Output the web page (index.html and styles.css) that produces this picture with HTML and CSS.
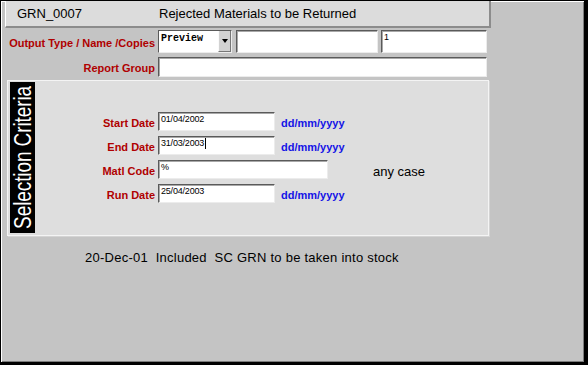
FILE: index.html
```html
<!DOCTYPE html>
<html lang="en">
<head>
    <meta charset="UTF-8">
    <title>GRN_0007 - Rejected Materials to be Returned</title>
    <link rel="stylesheet" href="styles.css">
</head>
<body>

    <div class="window">
        <div class="titlebar">
            <span class="report-code">GRN_0007</span>
            <span class="report-title">Rejected Materials to be Returned</span>
        </div>

        <div class="form-row row-output">
            <span class="label">Output Type / Name /Copies</span>
            <div class="combo">
                <span class="combo-value">Preview</span>
                <span class="combo-btn">
                    <svg width="6" height="4" viewBox="0 0 6 4"><path d="M0 0H6L3 4Z" fill="#000"/></svg>
                </span>
            </div>
            <div class="field field-name"></div>
            <div class="field field-copies">1</div>
        </div>

        <div class="form-row row-group">
            <span class="label">Report Group</span>
            <div class="field field-group"></div>
        </div>

        <div class="criteria">
            <div class="criteria-tab"><span>Selection Criteria</span></div>
            <div class="criteria-fields">
                <div class="crit-row">
                    <span class="label">Start Date</span>
                    <div class="field field-date">01/04/2002</div>
                    <span class="hint">dd/mm/yyyy</span>
                </div>
                <div class="crit-row">
                    <span class="label">End Date</span>
                    <div class="field field-date">31/03/2003<span class="caret"></span></div>
                    <span class="hint">dd/mm/yyyy</span>
                </div>
                <div class="crit-row">
                    <span class="label">Matl Code</span>
                    <div class="field field-code">%</div>
                    <span class="note-inline">any case</span>
                </div>
                <div class="crit-row">
                    <span class="label">Run Date</span>
                    <div class="field field-date">25/04/2003</div>
                    <span class="hint">dd/mm/yyyy</span>
                </div>
            </div>
        </div>

        <p class="footnote">20-Dec-01  Included  SC GRN to be taken into stock</p>
    </div>

</body>
</html>
```

FILE: styles.css
```css
body {
    margin: 0;
    font-family: "Liberation Sans", Arial, sans-serif;
}

.window {
    width: 588px;
    height: 365px;
    box-sizing: border-box;
    background-color: #c4c4c4;
    border-style: solid;
    border-color: #000;
    border-width: 1px 4px 3px 1px;
    box-shadow: inset 1px 1px 0 #fff, inset -1px -1px 0 #7c7c7c;
    padding-left: 4px;
    overflow: hidden;
}

/* title bar */
.titlebar {
    width: 486px;
    height: 27px;
    box-sizing: border-box;
    display: flex;
    align-items: center;
    background-color: #dcdcdc;
    border-left: 1px solid #fff;
    border-right: 2px solid #8c8c8c;
    border-bottom: 2px solid #8c8c8c;
    padding-left: 11px;
    font-size: 13px;
    color: #000;
}

.report-code {
    width: 142px;
}

/* top rows */
.form-row {
    display: flex;
    align-items: center;
}

.row-output {
    margin-top: 2px;
    height: 23px;
}

.row-group {
    margin-top: 4px;
    height: 20px;
}

.label {
    font-size: 11px;
    font-weight: bold;
    color: #b00000;
    text-align: right;
}

.form-row .label {
    width: 150px;
    margin-right: 3px;
    padding-top: 2px;
}

.field {
    box-sizing: border-box;
    height: 100%;
    background-color: #fff;
    border-style: solid;
    border-width: 1px;
    border-color: #5a5a5a #ececec #ececec #5a5a5a;
    box-shadow: inset 1px 1px 0 #a8a8a8;
    padding: 1px 2px;
    font-size: 9px;
    line-height: 11px;
    letter-spacing: -0.2px;
    color: #000;
}

.combo {
    box-sizing: border-box;
    width: 74px;
    height: 100%;
    display: flex;
    background-color: #fff;
    border-style: solid;
    border-width: 1px;
    border-color: #5a5a5a #ececec #ececec #5a5a5a;
    margin-right: 4px;
}

.combo-value {
    flex: 1;
    padding: 2px 2px;
    font-family: "Liberation Mono", "Courier New", monospace;
    font-size: 10px;
    font-weight: bold;
    line-height: 11px;
}

.combo-btn {
    width: 13px;
    box-sizing: border-box;
    display: flex;
    justify-content: center;
    padding-top: 8px;
    background-color: #d2d2d2;
    border-left: 1px solid #fafafa;
    border-right: 1px solid #777;
    border-bottom: 1px solid #777;
}

.combo-btn svg {
    display: block;
}

.field-name {
    width: 142px;
    margin-right: 3px;
}

.field-copies {
    width: 106px;
}

.field-group {
    width: 329px;
}

/* selection criteria panel */
.criteria {
    display: flex;
    width: 482px;
    height: 156px;
    box-sizing: border-box;
    margin: 3px 0 0 2px;
    padding: 1px 2px;
    background-color: #dedede;
    border: 1px solid #f4f4f4;
    box-shadow: 1px 1px 0 #d4d4d4;
}

.criteria-tab {
    width: 25px;
    height: 151px;
    flex-shrink: 0;
    background-color: #000;
    display: flex;
    align-items: center;
    justify-content: center;
}

.criteria-tab span {
    writing-mode: vertical-rl;
    transform: rotate(180deg) scaleX(1.3);
    font-size: 19px;
    line-height: 22px;
    letter-spacing: -0.1px;
    color: #fff;
    white-space: nowrap;
}

.criteria-fields {
    padding-top: 30px;
    display: flex;
    flex-direction: column;
    gap: 5px;
}

.crit-row {
    display: flex;
    align-items: center;
    height: 19px;
}

.crit-row .label {
    width: 120px;
    margin-right: 3px;
    padding-top: 3px;
}

.field-date {
    width: 117px;
}

.field-code {
    width: 170px;
}

.caret {
    display: inline-block;
    width: 1px;
    height: 11px;
    background-color: #000;
    vertical-align: top;
    margin-left: 1px;
}

.hint {
    margin-left: 6px;
    padding-top: 3px;
    font-size: 11px;
    font-weight: bold;
    color: #1414e6;
}

.note-inline {
    margin-left: 45px;
    padding-top: 3px;
    font-size: 13px;
    color: #000;
}

.footnote {
    margin: 14px 0 0 0;
    padding-left: 80px;
    font-size: 13px;
    line-height: 15px;
    letter-spacing: 0.25px;
    white-space: pre;
    color: #000;
}
```
